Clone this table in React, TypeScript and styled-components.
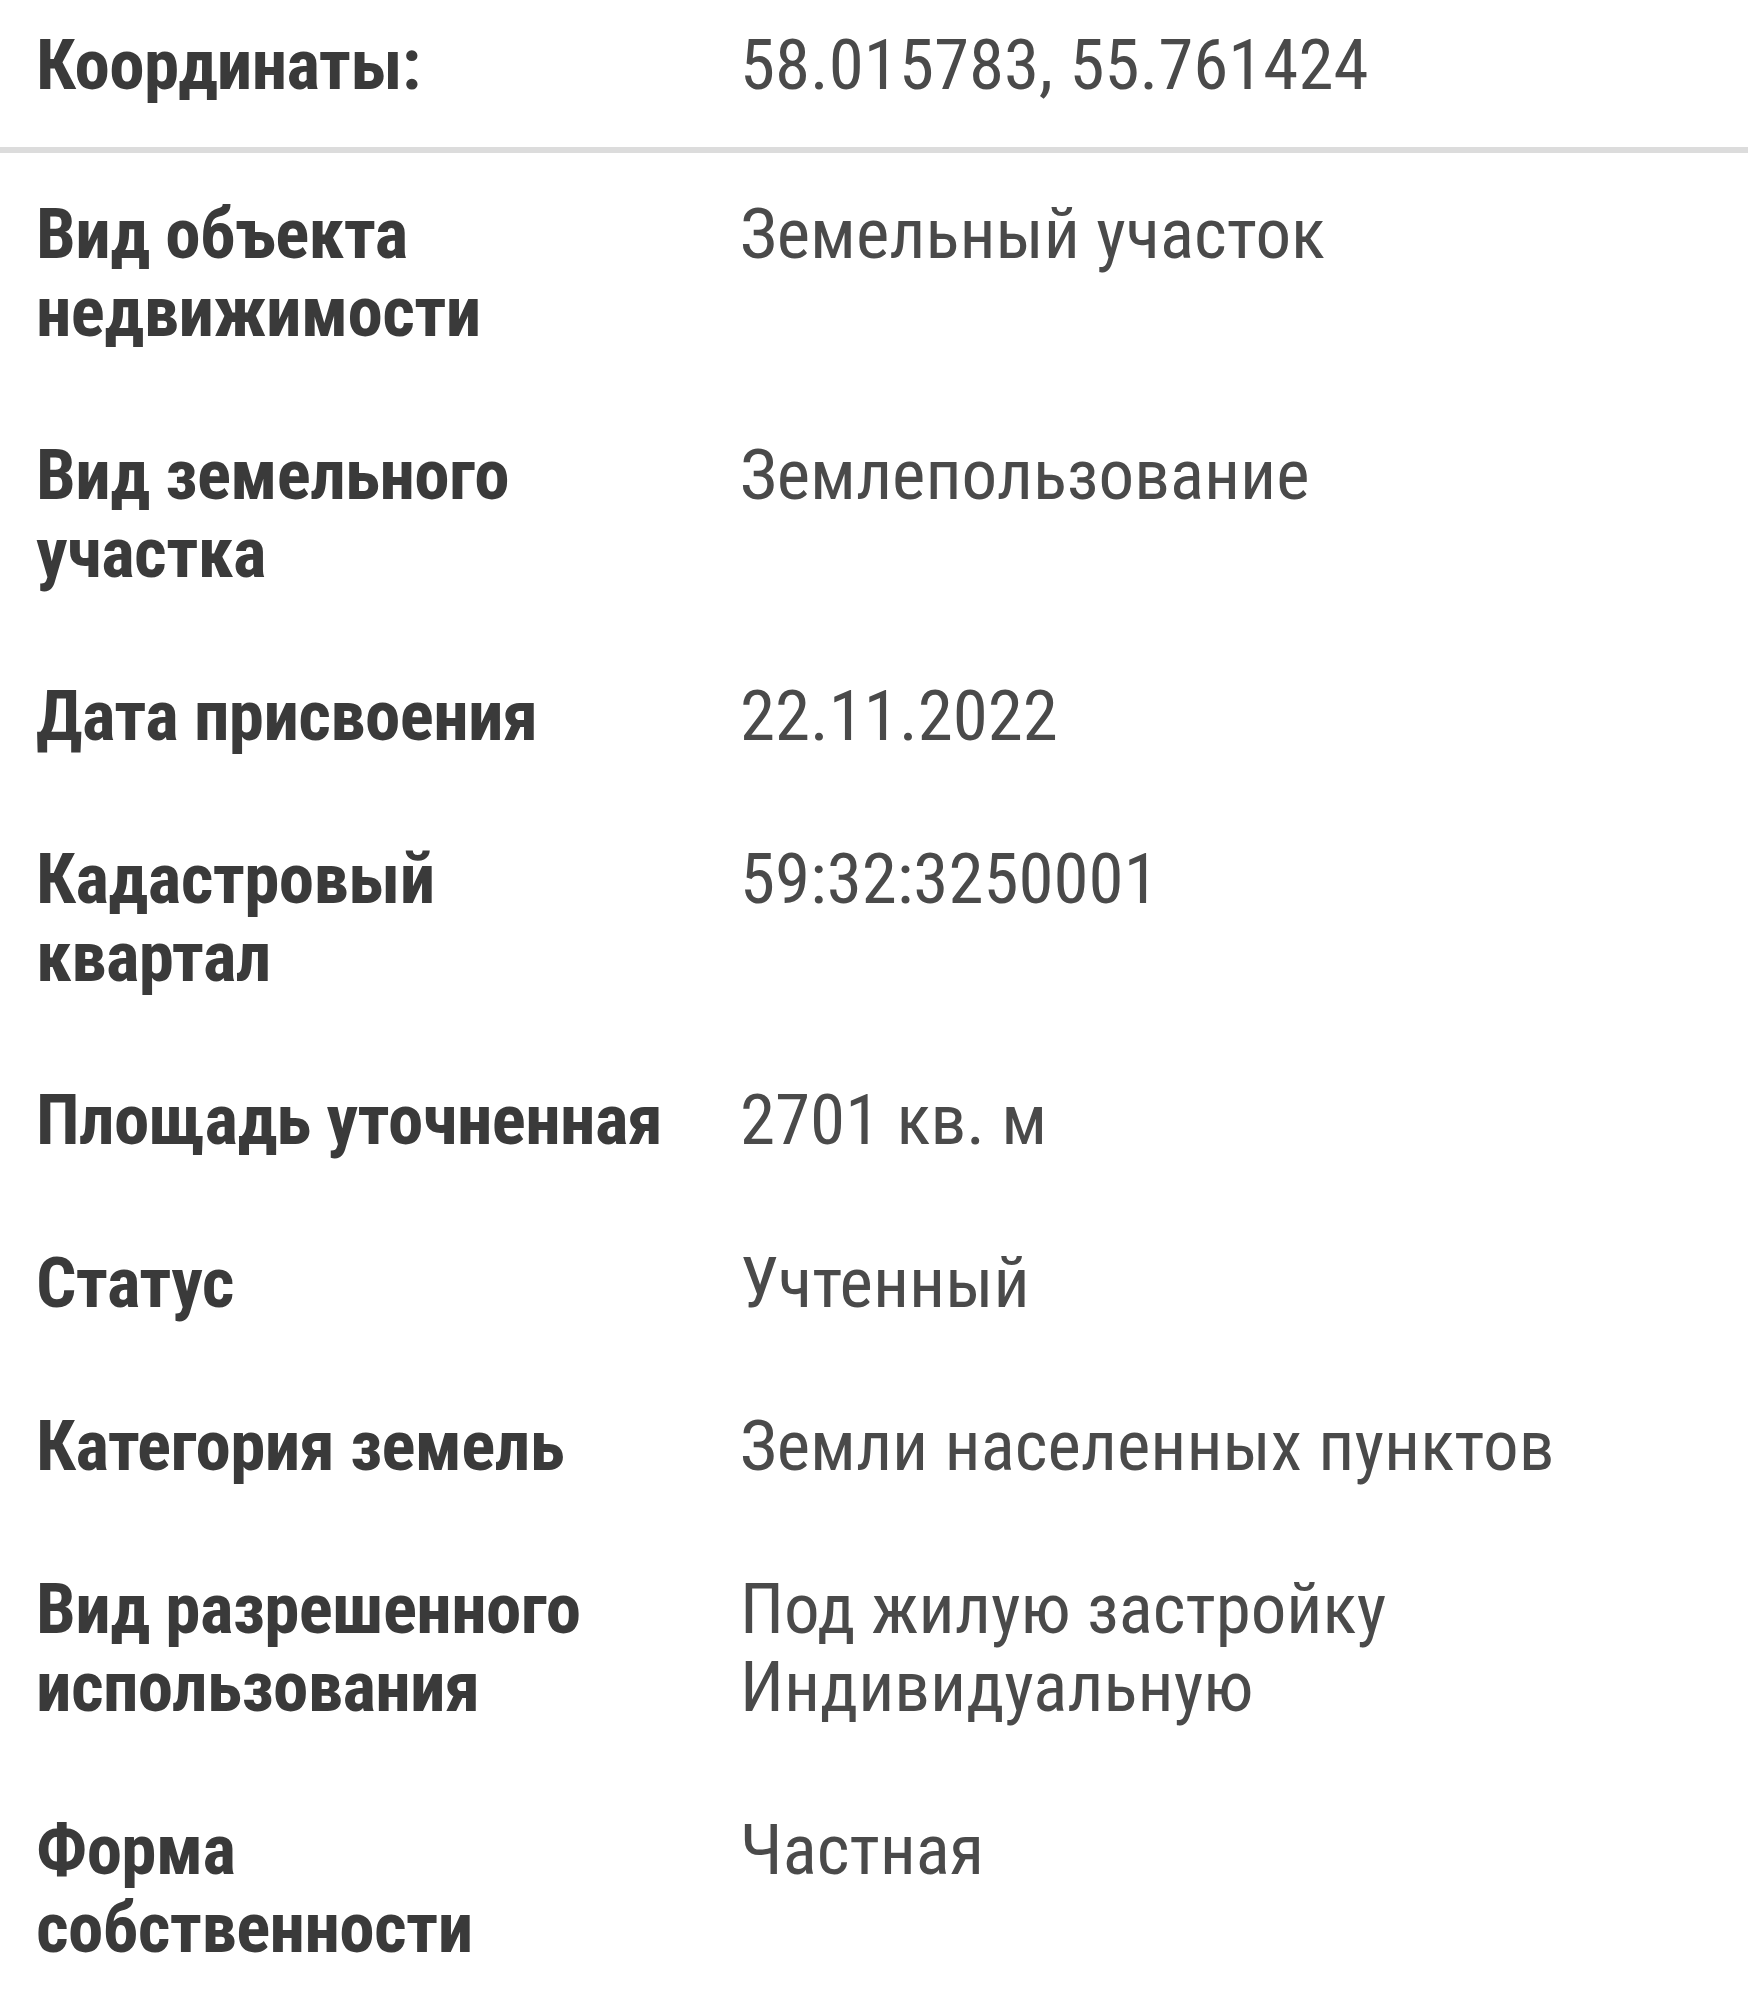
import React from "react";
import styled, { createGlobalStyle } from "styled-components";

const GlobalStyle = createGlobalStyle`
  html, body {
    margin: 0;
    padding: 0;
    background: #ffffff;
  }
`;

const Panel = styled.div`
  width: 1748px;
  font-family: "Roboto Condensed", Roboto, "Liberation Sans", sans-serif;
  font-stretch: condensed;
  font-size: 71px;
  line-height: 78px;
  background: #ffffff;
`;

const HeaderRow = styled.div`
  display: grid;
  grid-template-columns: 704px 1fr;
  padding: 26px 0 43px 36px;
  border-bottom: 6px solid #dcdcdc;
`;

const Row = styled.div`
  display: grid;
  grid-template-columns: 704px 1fr;
  padding: 42px 0 43px 36px;
`;

const Label = styled.div`
  font-weight: 700;
  letter-spacing: -0.6px;
  color: #3a3a3a;
  padding-right: 20px;
`;

const Value = styled.div`
  font-weight: 400;
  color: #4a4a4a;
`;

const rows: { label: React.ReactNode; value: React.ReactNode }[] = [
  { label: <>Вид объекта<br />недвижимости</>, value: "Земельный участок" },
  { label: <>Вид земельного<br />участка</>, value: "Землепользование" },
  { label: "Дата присвоения", value: "22.11.2022" },
  { label: <>Кадастровый<br />квартал</>, value: "59:32:3250001" },
  { label: "Площадь уточненная", value: "2701 кв. м" },
  { label: "Статус", value: "Учтенный" },
  { label: "Категория земель", value: "Земли населенных пунктов" },
  {
    label: <>Вид разрешенного<br />использования</>,
    value: <>Под жилую застройку<br />Индивидуальную</>,
  },
  { label: <>Форма<br />собственности</>, value: "Частная" },
];

export default function App() {
  return (
    <>
      <GlobalStyle />
      <Panel>
        <HeaderRow>
          <Label>Координаты:</Label>
          <Value>58.015783, 55.761424</Value>
        </HeaderRow>
        {rows.map((r, i) => (
          <Row key={i}>
            <Label>{r.label}</Label>
            <Value>{r.value}</Value>
          </Row>
        ))}
      </Panel>
    </>
  );
}
